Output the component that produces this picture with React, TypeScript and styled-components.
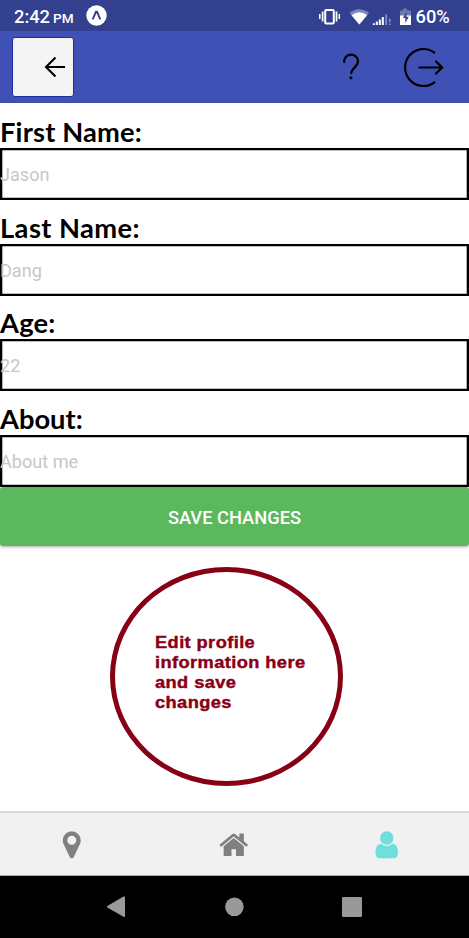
import React from "react";
import styled, { createGlobalStyle } from "styled-components";

const Global = createGlobalStyle`
  * { box-sizing: border-box; }
  body { margin: 0; background: #fff; }
`;

const Screen = styled.div`
  width: 469px;
  height: 938px;
  display: flex;
  flex-direction: column;
  overflow: hidden;
  background: #fff;
  font-family: Roboto, sans-serif;
`;

const StatusBar = styled.div`
  height: 31px;
  flex: none;
  display: flex;
  align-items: center;
  padding: 2px 18px 0 14px;
  background: #32408f;
  color: #fff;
  font-weight: 500;
  font-size: 18.3px;
  line-height: 30px;
`;

const Meridiem = styled.span`
  font-size: 13.6px;
  margin-left: 3px;
  padding-top: 2px;
`;

const ExpoBadge = styled.svg`
  margin: -1.5px 0 0 12px;
`;

const StatusIcons = styled.svg`
  margin: -2px 4px 0 auto;
`;

const Percent = styled.span`
  width: 35.5px;
  white-space: nowrap;
`;

const Header = styled.header`
  height: 72px;
  flex: none;
  display: flex;
  align-items: center;
  padding: 0 25px 0 12px;
  background: #3f51b5;
  border-bottom: 1px solid #3b4aa5;
`;

const BackButton = styled.button`
  width: 62px;
  height: 60px;
  padding: 0 7px 0 0;
  display: flex;
  align-items: center;
  justify-content: flex-end;
  border: 1px solid #1d2c9f;
  border-radius: 3px;
  background: #f4f4f4;
`;

const HeaderActions = styled.div`
  margin-left: auto;
  display: flex;
  align-items: center;
  gap: 43px;
  padding-top: 1px;
`;

const Form = styled.form`
  flex: none;
  display: flex;
  flex-direction: column;
  padding-top: 13px;
`;

const Field = styled.div`
  height: 95.7px;
  display: flex;
  flex-direction: column;
  &:nth-of-type(4) { height: 84px; }
`;

const Label = styled.label<{ $spacing: number }>`
  height: 32px;
  flex: none;
  align-self: flex-start;
  transform: scaleX(1.05);
  transform-origin: 0 0;
  font-family: Lato, sans-serif;
  font-weight: 700;
  font-size: 26px;
  line-height: 32px;
  letter-spacing: ${(p) => p.$spacing}px;
  color: #000;
`;

const ValueBox = styled.div`
  height: 52px;
  flex: none;
  box-shadow: inset 0 0 0 2.3px #000;
  color: #c7c7c7;
  font-size: 18.1px;
  line-height: 53px;
`;

const SaveButton = styled.button`
  height: 59px;
  border: 0;
  border-radius: 3px;
  background: #5cb85c;
  box-shadow: 0 1px 3px rgba(0, 0, 0, 0.35);
  color: #fff;
  font: 500 18.3px/60px Roboto, sans-serif;
  padding: 1px 0 0;
`;

const Body = styled.main`
  flex: 1;
  padding: 21px 0 0 110px;
`;

const Callout = styled.div`
  width: 233px;
  height: 219px;
  border: 5px solid #880015;
  border-radius: 50%;
  padding: 61px 0 0 39.5px;
`;

const CalloutText = styled.p`
  margin: 0;
  width: max-content;
  transform: scaleX(1.14);
  transform-origin: 0 0;
  color: #880015;
  -webkit-text-stroke: 0.4px #880015;
  font: 700 16px/20px "Liberation Sans", sans-serif;
  letter-spacing: 0.36px;
`;

const TabBar = styled.nav`
  height: 65px;
  flex: none;
  display: grid;
  grid-template-columns: 143px 181px 125px;
  align-items: center;
  justify-items: center;
  background: #f1f1f1;
  border-top: 2px solid #d8d8d8;
  border-bottom: 1px solid #a8aeab;
  padding-top: 2px;
`;

const SystemNav = styled.div`
  height: 62px;
  flex: none;
  background: #000;
  display: flex;
  align-items: center;
  padding-left: 106px;
`;

const fields = [
  { label: "First Name:", value: "Jason", spacing: 0.15 },
  { label: "Last Name:", value: "Dang", spacing: 0.4 },
  { label: "Age:", value: "22", spacing: 0.2 },
  { label: "About:", value: "About me", spacing: 0 },
];

const PIN =
  "M1152 640q0-106-75-181t-181-75-181 75-75 181 75 181 181 75 181-75 75-181zm256 0q0 109-33 179l-364 774q-16 33-47.5 52t-67.5 19-67.5-19-46.5-52l-365-774q-33-70-33-179 0-212 150-362t362-150 362 150 150 362z";
const HOME =
  "M1472 992v480q0 26-19 45t-45 19h-384v-384h-256v384h-384q-26 0-45-19t-19-45v-480q0-1 .5-3t.5-3l575-474 575 474q1 2 1 6zm223-69l-62 74q-8 9-21 11h-3q-13 0-21-7l-692-577-692 577q-12 8-24 7-13-2-21-11l-62-74q-8-10-7-23.5t11-21.5l719-599q32-26 76-26t76 26l244 204v-195q0-14 9-23t23-9h192q14 0 23 9t9 23v408l219 182q10 8 11 21.5t-7 23.5z";
const USER =
  "M1536 1399q0 109-62.5 187t-150.5 78h-854q-88 0-150.5-78t-62.5-187q0-85 8.5-160.5t31.5-152 58.5-131 94-89 134.5-34.5q131 128 313 128t313-128q76 0 134.5 34.5t94 89 58.5 131 31.5 152 8.5 160.5zm-256-887q0 159-112.5 271.5t-271.5 112.5-271.5-112.5-112.5-271.5 112.5-271.5 271.5-112.5 271.5 112.5 112.5 271.5z";

const TabIcon = ({ d, color }: { d: string; color: string }) => (
  <svg width="31.5" height="31.5" viewBox="0 0 1792 1792" fill={color}>
    <path d={d} />
  </svg>
);

export default function App() {
  return (
    <Screen>
      <Global />
      <StatusBar>
        <span>2:42</span>
        <Meridiem>PM</Meridiem>
        <ExpoBadge width="21" height="21" viewBox="0 0 21 21">
          <circle cx="10.5" cy="10.5" r="10.2" fill="#fff" />
          <path d="M6.7 14.3 L10 6.8 H11 L14.3 14.3" fill="none" stroke="#32408f" strokeWidth="1.9" />
        </ExpoBadge>
        <StatusIcons width="94" height="20" viewBox="318 5 94 20">
          <g fill="none" stroke="#fff">
            <rect x="325.2" y="9" width="8.6" height="13.4" rx="1" strokeWidth="2" />
            <path d="M322.6 10.5V20.5M336.5 10.5V20.5" strokeWidth="1.7" />
            <path d="M319.8 13V18M339.3 13V18" strokeWidth="1.5" />
          </g>
          <path d="M349.5 12 Q359 4.5 369 12 L359.3 23.5Z" fill="#7d87bb" />
          <path d="M351.5 14.2 Q359.3 8.5 367.1 14.2 L359.3 23.5Z" fill="#fff" />
          <path d="M373.8 24V22.3M376.8 24V20.5M379.8 24V18.5M382.8 24V16" stroke="#fff" strokeWidth="2" />
          <path d="M386.2 24V13.3M389.8 24V22.5M389.8 21V17.8" stroke="#8993c3" strokeWidth="1.7" />
          <path d="M403 7.5h4v2h4v6h-11v-6h3z" fill="#6e79b2" />
          <path d="M400 14.5h11v9.5h-11z" fill="#fff" />
          <path d="M406.4 11 L403 17h2.3v5l3.5-6.3h-2.4z" fill="#32408f" />
        </StatusIcons>
        <Percent>60%</Percent>
      </StatusBar>
      <Header>
        <BackButton type="button" aria-label="Back">
          <svg width="22" height="22" viewBox="0 0 22 22" fill="none" stroke="#000" strokeWidth="2.1">
            <path d="M21 11H2M11.5 1.5L2 11l9.5 9.5" />
          </svg>
        </BackButton>
        <HeaderActions>
          <svg width="18" height="28" viewBox="0 0 18 28" fill="none" stroke="#000" strokeWidth="2.2" strokeLinecap="round">
            <path d="M2.2 9V8a6.9 6.4 0 0 1 13.8 0c0 3.4-2 5-4 7.1-2 2-2.8 3-2.8 5" />
            <circle cx="8.9" cy="24.7" r="1.5" fill="#000" stroke="none" />
          </svg>
          <svg width="41" height="41" viewBox="0 0 41 41" fill="none" stroke="#000" strokeWidth="2.2" strokeLinecap="round" strokeLinejoin="round">
            <path d="M31.4 5.7A18.3 18.5 0 1 0 31.4 35.3M16.3 20.5H39.2M33 14.5l6.3 6-6.3 6" />
          </svg>
        </HeaderActions>
      </Header>
      <Form>
        {fields.map((f) => (
          <Field key={f.label}>
            <Label $spacing={f.spacing}>{f.label}</Label>
            <ValueBox>{f.value}</ValueBox>
          </Field>
        ))}
        <SaveButton type="button">SAVE CHANGES</SaveButton>
      </Form>
      <Body>
        <Callout>
          <CalloutText>
            Edit profile
            <br />
            information here
            <br />
            and save
            <br />
            changes
          </CalloutText>
        </Callout>
      </Body>
      <TabBar>
        <TabIcon d={PIN} color="#808080" />
        <TabIcon d={HOME} color="#808080" />
        <TabIcon d={USER} color="#70dfdc" />
      </TabBar>
      <SystemNav>
        <svg width="256" height="24" viewBox="106 895 256 24" fill="#999">
          <path d="M107.3 906 L123.5 896.6Q125 896 125 897.2V916Q125 917.3 123.5 916.7L107.3 907.6Q106.3 906.8 107.3 906Z" />
          <circle cx="234.4" cy="906.8" r="9.3" />
          <rect x="342" y="897" width="20" height="20" rx="1.3" />
        </svg>
      </SystemNav>
    </Screen>
  );
}
